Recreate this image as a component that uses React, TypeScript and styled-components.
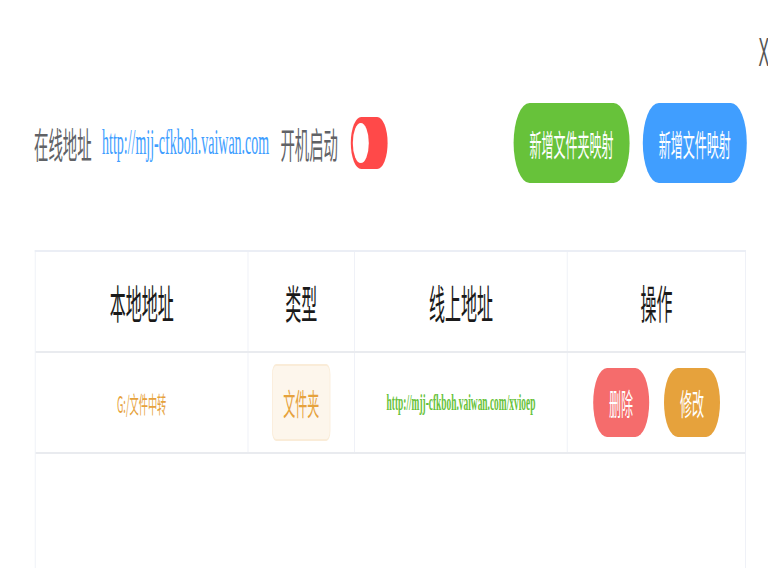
import styled, { createGlobalStyle } from "styled-components";

const GlobalStyle = createGlobalStyle`
  html, body {
    margin: 0;
    padding: 0;
    background: #ffffff;
    overflow: hidden;
  }
  * {
    box-sizing: border-box;
  }
`;

// the page is laid out at 1920px wide and squeezed into the 768px window
const Stage = styled.div`
  width: 1920px;
  transform: scaleX(0.4);
  transform-origin: 0 0;
  font-family: "Noto Sans CJK SC", "Noto Sans", sans-serif;
`;

const CloseBar = styled.div`
  display: flex;
  justify-content: flex-end;
  height: 103px;
  padding-top: 32px;
`;

const CloseButton = styled.span`
  font-family: "Liberation Sans", Arial, sans-serif;
  font-size: 40px;
  line-height: 40px;
  color: #555555;
  margin-right: -3px;
  cursor: pointer;
`;

const Toolbar = styled.div`
  display: flex;
  align-items: center;
  justify-content: space-between;
  height: 80px;
  padding: 0 53px 0 85px;
`;

const Group = styled.div`
  display: flex;
  align-items: center;
`;

const Label = styled.span`
  font-size: 36px;
  line-height: 50px;
  color: #606266;
`;

const Link = styled.a`
  font-family: "Liberation Serif", "Times New Roman", serif;
  font-size: 35px;
  line-height: 50px;
  color: #409eff;
  text-decoration: none;
  margin: 0 28px 0 26px;
`;

const Toggle = styled.div<{ on: boolean }>`
  position: relative;
  width: 92px;
  height: 52px;
  margin-left: 32px;
  border-radius: 26px;
  background-color: ${(props) => (props.on ? "#13ce66" : "#ff4949")};
`;

const Knob = styled.span<{ on: boolean }>`
  position: absolute;
  top: 6px;
  left: ${(props) => (props.on ? "47px" : "5px")};
  width: 40px;
  height: 40px;
  border-radius: 50%;
  background-color: #ffffff;
`;

const ButtonRow = styled.div`
  display: flex;
  gap: 33px;
`;

const PillButton = styled.button<{ color: string }>`
  height: 80px;
  padding: 0 40px;
  border: none;
  border-radius: 40px;
  background-color: ${(props) => props.color};
  color: #ffffff;
  font-family: inherit;
  font-size: 30px;
  line-height: 80px;
  cursor: pointer;
`;

const Table = styled.div`
  width: 1778px;
  margin: 67px 0 0 87px;
  border: 2px solid #ebeef5;
  border-bottom: none;
`;

const Row = styled.div`
  display: grid;
  grid-template-columns: 30% 15% 30% 25%;
  height: 101px;
  border-bottom: 2px solid #e9ebef;
`;

const Cell = styled.div<{ last?: boolean }>`
  display: flex;
  align-items: center;
  justify-content: center;
  border-right: ${(props) => (props.last ? "none" : "2px solid #ebeef5")};
`;

const HeadText = styled.span`
  font-size: 40px;
  line-height: 50px;
  color: #1a1a1a;
`;

const LocalPath = styled.span`
  font-size: 23px;
  color: #e6a23c;
`;

const Tag = styled.span`
  height: 77px;
  padding: 0 26px;
  border: 2px solid #faecd8;
  border-radius: 10px;
  background-color: #fdf6ec;
  color: #e6a23c;
  font-size: 30px;
  line-height: 73px;
`;

const RemoteLink = styled.a`
  font-family: "Liberation Serif", "Times New Roman", serif;
  font-size: 23.5px;
  font-weight: bold;
  color: #67c23a;
  text-decoration: none;
`;

const ActionRow = styled.div`
  display: flex;
  gap: 37px;
`;

const ActionButton = styled.button<{ color: string }>`
  height: 69px;
  padding: 0 40px;
  border: none;
  border-radius: 35px;
  background-color: ${(props) => props.color};
  color: #ffffff;
  font-family: inherit;
  font-size: 30px;
  line-height: 69px;
  cursor: pointer;
`;

const TableTail = styled.div`
  height: 300px;
`;

const mappings = [
  {
    local: "G:/文件中转",
    type: "文件夹",
    remote: "http://mjj-cfkboh.vaiwan.com/xvioep",
  },
];

function App() {
  const autoStart = false;

  return (
    <>
      <GlobalStyle />
      <Stage>
        <CloseBar>
          <CloseButton>X</CloseButton>
        </CloseBar>
        <Toolbar>
          <Group>
            <Label>在线地址</Label>
            <Link href="#">http://mjj-cfkboh.vaiwan.com</Link>
            <Label>开机启动</Label>
            <Toggle on={autoStart}>
              <Knob on={autoStart} />
            </Toggle>
          </Group>
          <ButtonRow>
            <PillButton color="#67c23a">新增文件夹映射</PillButton>
            <PillButton color="#409eff">新增文件映射</PillButton>
          </ButtonRow>
        </Toolbar>
        <Table>
          <Row>
            <Cell><HeadText>本地地址</HeadText></Cell>
            <Cell><HeadText>类型</HeadText></Cell>
            <Cell><HeadText>线上地址</HeadText></Cell>
            <Cell last><HeadText>操作</HeadText></Cell>
          </Row>
          {mappings.map((item) => (
            <Row key={item.remote}>
              <Cell><LocalPath>{item.local}</LocalPath></Cell>
              <Cell><Tag>{item.type}</Tag></Cell>
              <Cell><RemoteLink href="#">{item.remote}</RemoteLink></Cell>
              <Cell last>
                <ActionRow>
                  <ActionButton color="#f56c6c">删除</ActionButton>
                  <ActionButton color="#e6a23c">修改</ActionButton>
                </ActionRow>
              </Cell>
            </Row>
          ))}
          <TableTail />
        </Table>
      </Stage>
    </>
  );
}

export default App;
